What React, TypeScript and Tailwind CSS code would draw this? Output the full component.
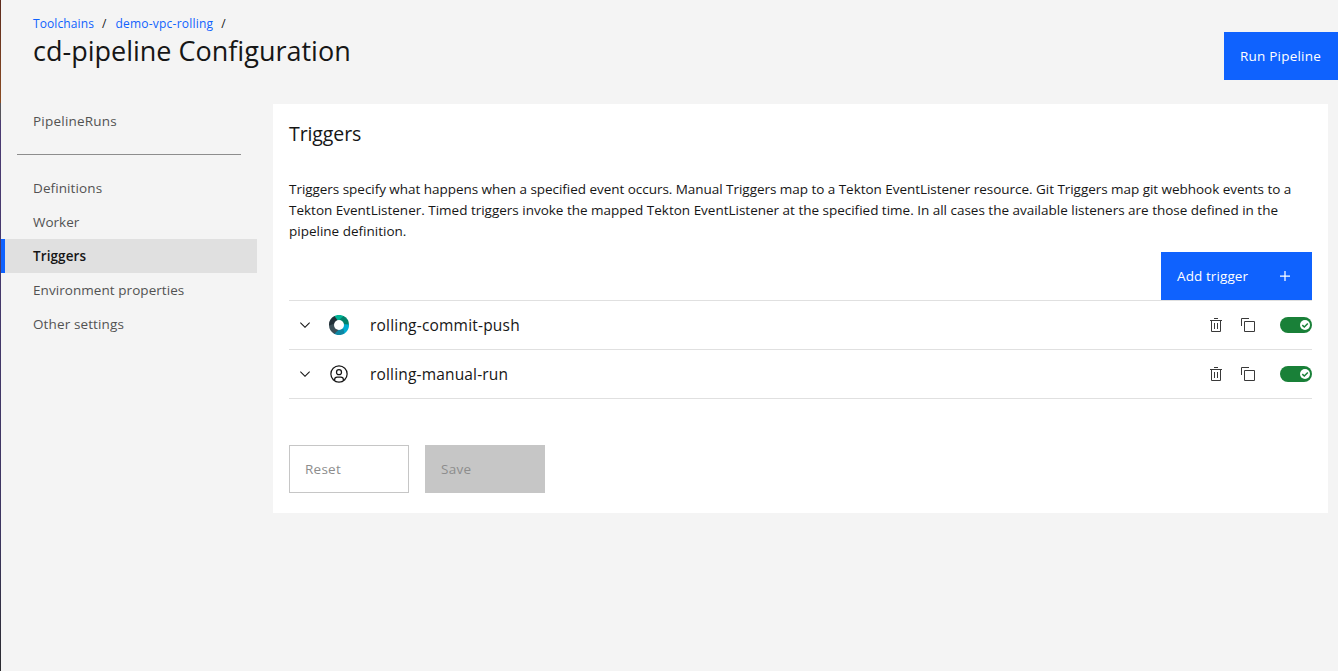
import type { ReactNode } from 'react'

function ChevronDown() {
  return (
    <svg viewBox="0 0 16 16" className="h-4 w-4 fill-[#161616]">
      <path d="M8 11L3 6 3.7 5.3 8 9.6 12.3 5.3 13 6z" />
    </svg>
  )
}

function AddIcon() {
  return (
    <svg viewBox="0 0 32 32" className="h-5 w-5 fill-white">
      <path d="M17 15V8h-2v7H8v2h7v7h2v-7h7v-2z" />
    </svg>
  )
}

function TrashIcon() {
  return (
    <svg viewBox="0 0 32 32" className="h-4 w-4 fill-[#393939]">
      <path d="M12 12H14V24H12zM18 12H20V24H18z" />
      <path d="M4 6V8H6V28a2 2 0 0 0 2 2H24a2 2 0 0 0 2-2V8h2V6zM8 28V8H24V28z" />
      <path d="M12 2H20V4H12z" />
    </svg>
  )
}

function CopyIcon() {
  return (
    <svg viewBox="0 0 32 32" className="h-4 w-4 fill-[#393939]">
      <path d="M28 10V28H10V10H28m0-2H10a2 2 0 0 0-2 2V28a2 2 0 0 0 2 2H28a2 2 0 0 0 2-2V10a2 2 0 0 0-2-2Z" />
      <path d="M4 18H2V4A2 2 0 0 1 4 2H18V4H4Z" />
    </svg>
  )
}

function RingIcon() {
  return (
    <svg viewBox="0 0 20 20" className="h-5 w-5">
      <path d="M5 1.3A10 10 0 0 1 15 1.3L15 10H5Z" fill="#00b295" />
      <path d="M14.6 1.1A10 10 0 0 1 20 10H12L10.6 4.6Z" fill="#00826b" />
      <path d="M20 9.4A10 10 0 0 1 15 18.7L10 15.4L12 9Z" fill="#00aed1" />
      <path d="M15.4 18.4A10 10 0 0 1 5 18.7L4.4 14.2L10 11L14.6 14Z" fill="#0e86a3" />
      <path d="M5.4 18.9A10 10 0 0 1 0 10L3 7.6L9 10L9 15.2Z" fill="#3c4f58" />
      <path d="M0 10.4A10 10 0 0 1 5.4 1.1L8.6 5.2L8 10L4.4 9Z" fill="#223039" />
      <circle cx="10" cy="10" r="5" fill="#fff" />
    </svg>
  )
}

function UserIcon() {
  return (
    <svg viewBox="0 0 32 32" className="h-5 w-5 fill-[#161616]">
      <path d="M16 8a5 5 0 1 0 5 5A5 5 0 0 0 16 8Zm0 8a3 3 0 1 1 3-3A3 3 0 0 1 16 16Z" />
      <path d="M16 2A14 14 0 1 0 30 16 14 14 0 0 0 16 2ZM10 26.3765V25a3 3 0 0 1 3-3h6a3 3 0 0 1 3 3v1.3765a11.9 11.9 0 0 1-12 0Zm13.9925-1.4507A5 5 0 0 0 19 20H13a5 5 0 0 0-4.9925 4.9258 12 12 0 1 1 15.985 0Z" />
    </svg>
  )
}

function Toggle() {
  return (
    <div className="flex h-4 w-8 items-center justify-end rounded-full bg-[#198038] pr-0.5">
      <svg viewBox="0 0 10 10" className="h-2.5 w-2.5">
        <circle cx="5" cy="5" r="5" fill="#fff" />
        <path d="M2.3 5.1L4.3 7L7.8 3.5" fill="none" stroke="#198038" strokeWidth="1.5" />
      </svg>
    </div>
  )
}

function NavItem({ label, spacing, active }: { label: string; spacing: string; active?: boolean }) {
  return (
    <li
      className={`flex h-[34px] w-64 items-center border-l-4 pl-7 text-[13.5px] ${spacing} ${
        active ? 'border-[#0f62fe] bg-[#e0e0e0] font-semibold text-[#161616]' : 'border-transparent text-[#525252]'
      }`}
    >
      {label}
    </li>
  )
}

function TriggerRow({ icon, name, spacing }: { icon: ReactNode; name: string; spacing: string }) {
  return (
    <li className="flex h-[49px] items-center border-b border-[#e0e0e0] pl-2">
      <ChevronDown />
      <div className="ml-4">{icon}</div>
      <span className={`ml-[21px] pt-0.5 text-[15.5px] ${spacing}`}>{name}</span>
      <div className="ml-auto flex items-center">
        <TrashIcon />
        <div className="ml-4">
          <CopyIcon />
        </div>
        <div className="ml-6">
          <Toggle />
        </div>
      </div>
    </li>
  )
}

export default function App() {
  return (
    <div className="flex h-[671px] w-[1338px] overflow-hidden bg-[#f4f4f4] font-['Open_Sans',sans-serif] text-[#161616]">
      <div className="flex w-px shrink-0 flex-col">
        <div className="h-[103px] bg-linear-to-b from-[#5c2a1c] to-[#8a4b22]" />
        <div className="h-[17px] bg-[#55535a]" />
        <div className="grow bg-linear-to-b from-[#4a3a72] from-0% via-[#3c3560] via-75% to-[#2a2a2e]" />
      </div>
      <div className="flex grow flex-col">
        <header className="flex h-[104px] justify-between pl-8">
          <div className="pt-4">
            <nav className="flex h-4 items-center text-[12px]">
              <a className="tracking-[0.1px] text-[#0f62fe]">Toolchains</a>
              <span className="ml-2">/</span>
              <a className="ml-[9px] tracking-[0.23px] text-[#0f62fe]">demo-vpc-rolling</a>
              <span className="ml-2">/</span>
            </nav>
            <h1 className="mt-px h-9 text-[27px] leading-9 font-normal whitespace-nowrap">cd-pipeline Configuration</h1>
          </div>
          <button className="mt-8 h-12 w-[114px] bg-[#0f62fe] pl-4 text-left text-[13.5px] tracking-[0.21px] whitespace-nowrap text-white">
            Run Pipeline
          </button>
        </header>
        <div className="flex items-start">
          <aside className="w-[272px] shrink-0">
            <ul>
              <NavItem label="PipelineRuns" spacing="tracking-[0.22px]" />
            </ul>
            <div className="mt-4 mb-4 ml-4 h-px w-56 bg-[#8d8d8d]" />
            <ul>
              <NavItem label="Definitions" spacing="tracking-[0.1px]" />
              <NavItem label="Worker" spacing="tracking-[0px]" />
              <NavItem label="Triggers" spacing="tracking-[0.1px]" active />
              <NavItem label="Environment properties" spacing="tracking-[0.06px]" />
              <NavItem label="Other settings" spacing="tracking-[0.12px]" />
            </ul>
          </aside>
          <main className="h-[409px] w-[1055px] bg-white px-4 pt-4">
            <h2 className="h-7 text-[19.5px] leading-7 tracking-[-0.1px]">Triggers</h2>
            <div className="mt-[31px] text-[13.5px] leading-[21px] whitespace-nowrap">
              <p className="tracking-[-0.038px]">
                Triggers specify what happens when a specified event occurs. Manual Triggers map to a Tekton
                EventListener resource. Git Triggers map git webhook events to a
              </p>
              <p className="tracking-[-0.009px]">
                Tekton EventListener. Timed triggers invoke the mapped Tekton EventListener at the specified time. In
                all cases the available listeners are those defined in the
              </p>
              <p>pipeline definition.</p>
            </div>
            <div className="mt-2.5 flex justify-end">
              <button className="flex h-12 w-[151px] items-center justify-between bg-[#0f62fe] pr-[17px] pl-4 text-[13.5px] tracking-[0.1px] text-white">
                Add trigger
                <AddIcon />
              </button>
            </div>
            <ul className="border-t border-[#e0e0e0]">
              <TriggerRow icon={<RingIcon />} name="rolling-commit-push" spacing="tracking-[0.2px]" />
              <TriggerRow icon={<UserIcon />} name="rolling-manual-run" spacing="tracking-[0.17px]" />
            </ul>
            <div className="mt-[46px] flex gap-4 text-[13.5px] tracking-[0.25px] text-[#8d8d8d]">
              <button className="h-12 w-[120px] border border-[#c6c6c6] pl-[15px] text-left">Reset</button>
              <button className="h-12 w-[120px] bg-[#c6c6c6] pl-4 text-left">Save</button>
            </div>
          </main>
        </div>
      </div>
    </div>
  )
}
